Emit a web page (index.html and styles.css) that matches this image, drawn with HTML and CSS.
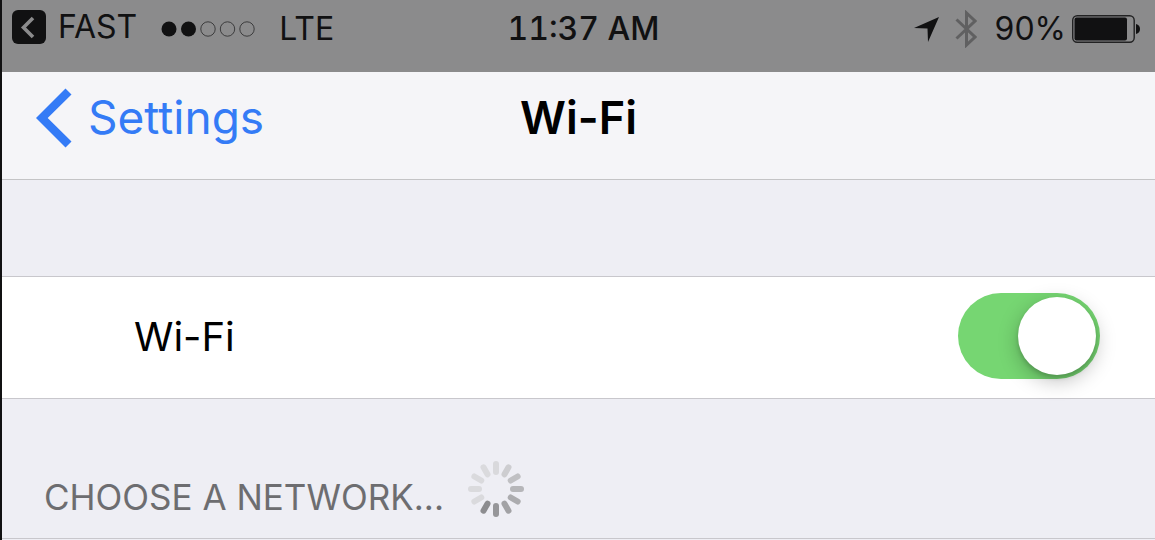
FILE: index.html
```html
<!DOCTYPE html>
<html lang="en">
<head>
  <meta charset="UTF-8" />
  <meta name="viewport" content="width=device-width, initial-scale=1" />
  <title>Wi-Fi</title>
  <link rel="stylesheet" href="styles.css">
</head>
<body>
  <div class="status-bar">
    <div class="status-left">
      <a class="back-app" href="#fast">
        <svg width="34" height="34" viewBox="0 0 34 34" aria-hidden="true">
          <rect width="34" height="34" rx="6" fill="#111112" />
          <path d="M21 8 L11.500 17.500 L21 27" fill="none" stroke="#8b8b8c" stroke-width="3.600" />
        </svg>
        <span>FAST</span>
      </a>
      <svg class="signal" width="94" height="16" viewBox="0 0 94 16" aria-hidden="true">
        <circle cx="8" cy="8" r="7.500" fill="#111112" />
        <circle cx="27.500" cy="8" r="7.500" fill="#111112" />
        <g fill="none" stroke="#3c3c3d" stroke-width="1">
          <circle cx="47" cy="8" r="7.200" />
          <circle cx="66.500" cy="8" r="7.200" />
          <circle cx="86" cy="8" r="7.200" />
        </g>
      </svg>
      <span class="carrier">LTE</span>
    </div>
    <time class="clock">11:37 AM</time>
    <div class="status-right">
      <svg class="location" width="25" height="25" viewBox="0 0 25 25" aria-hidden="true">
        <path d="M25 0 L14 25 L13.500 11.500 L0 11 Z" fill="#111112" />
      </svg>
      <svg class="bluetooth" width="22" height="38" viewBox="0 0 22 38" aria-hidden="true">
        <path d="M1.500 9.500 L20 27 L11.500 35 V3 L20 11 L1.500 28.500" fill="none" stroke="#606061" stroke-width="3" />
      </svg>
      <span class="percent">90%</span>
      <svg class="battery" width="69" height="28" viewBox="0 0 69 28" aria-hidden="true">
        <rect x="0.700" y="0.700" width="61.500" height="26.500" rx="4.500" fill="none" stroke="#222223" stroke-width="1.400" />
        <rect x="2.500" y="2.500" width="52.500" height="23" rx="2" fill="#111112" />
        <path d="M64 9 Q68 10 68 14 Q68 18 64 19 Z" fill="#111112" />
      </svg>
    </div>
  </div>

  <header class="nav-bar">
    <a class="back" href="#settings">
      <svg width="36" height="60" viewBox="0 0 36 60" aria-hidden="true">
        <path d="M0 30 L29.500 0.600 L35.500 6.400 L11.700 30 L35.500 53.600 L29.500 59.400 Z" fill="#347bf6" />
      </svg>
      <span>Settings</span>
    </a>
    <h1>Wi-Fi</h1>
  </header>

  <main>
    <div class="row">
      <label for="wifi">Wi-Fi</label>
      <input class="switch" type="checkbox" role="switch" id="wifi" checked>
    </div>

    <div class="section-head">
      <h2>CHOOSE A NETWORK...</h2>
      <svg class="spinner" width="56" height="56" viewBox="-28 -28 56 56" aria-hidden="true">
        <g stroke-width="6" stroke-linecap="round">
          <line y1="-17" y2="-25" stroke="#d9d9dc" />
          <line y1="-17" y2="-25" stroke="#cdcdd0" transform="rotate(30)" />
          <line y1="-17" y2="-25" stroke="#c0c0c3" transform="rotate(60)" />
          <line y1="-17" y2="-25" stroke="#b6b6b9" transform="rotate(90)" />
          <line y1="-17" y2="-25" stroke="#acacaf" transform="rotate(120)" />
          <line y1="-17" y2="-25" stroke="#a2a2a5" transform="rotate(150)" />
          <line y1="-17" y2="-25" stroke="#969699" transform="rotate(180)" />
          <line y1="-17" y2="-25" stroke="#8c8c8f" transform="rotate(210)" />
          <line y1="-17" y2="-25" stroke="#dadadd" transform="rotate(240)" />
          <line y1="-17" y2="-25" stroke="#dadadd" transform="rotate(270)" />
          <line y1="-17" y2="-25" stroke="#dadadd" transform="rotate(300)" />
          <line y1="-17" y2="-25" stroke="#dadadd" transform="rotate(330)" />
        </g>
      </svg>
    </div>
  </main>
</body>
</html>
```

FILE: styles.css
```css
* {
  box-sizing: border-box;
}
body {
  margin: 0;
  min-height: 100vh;
  border-left: 2px solid #111112;
  background: #eeeef4;
  color: #000;
  font-family: Inter, "Liberation Sans", sans-serif;
}
svg {
  display: block;
  flex: none;
}
a {
  text-decoration: none;
}
h1, h2 {
  margin: 0;
}

/* status bar */
.status-bar {
  display: grid;
  grid-template-columns: 1fr auto 1fr;
  align-items: center;
  padding-bottom: 14px;
  background: #8b8b8c;
  color: #111112;
  font-size: 32px;
  line-height: 58px;
  white-space: nowrap;
}
.status-left, .status-right, .back-app {
  display: flex;
  align-items: center;
}
.status-left {
  padding-left: 10px;
}
.back-app {
  gap: 12px;
  padding-bottom: 4px;
  line-height: 54px;
  color: inherit;
}
.signal {
  margin: 0 24px;
}
.clock {
  padding-left: 10px;
  font-weight: 500;
  font-variant-numeric: tabular-nums;
}
.status-right {
  justify-content: flex-end;
  padding-right: 14px;
}
.bluetooth {
  margin: 0 18px 0 16px;
}
.battery {
  margin-left: 6px;
}

/* navigation bar */
.nav-bar {
  display: grid;
  grid-template-columns: 1fr auto 1fr;
  align-items: center;
  padding-bottom: 16px;
  border-bottom: 1px solid #c4c4c6;
  background: #f5f5f8;
  font-size: 46px;
  line-height: 91px;
}
.back {
  display: flex;
  align-items: center;
  gap: 16px;
  padding-left: 34px;
  color: #347bf6;
}
.nav-bar h1 {
  font-size: 45px;
  font-weight: 600;
}

/* settings rows */
main {
  padding-top: 96px;
}
.row {
  display: flex;
  align-items: center;
  justify-content: space-between;
  padding: 16px 55px 19px 132px;
  border: solid #c8c7cc;
  border-width: 1px 0;
  background: #fff;
  font-size: 40px;
}
.switch {
  appearance: none;
  display: flex;
  justify-content: flex-end;
  width: 142px;
  height: 86px;
  margin: 0;
  padding: 4px;
  border-radius: 43px;
  background: #d8d8dc;
  cursor: pointer;
}
.switch::before {
  content: "";
  width: 78px;
  height: 78px;
  border-radius: 50%;
  background: #fff;
  box-shadow: 0 6px 20px rgba(0, 0, 0, 0.25), 0 3px 4px rgba(0, 0, 0, 0.15);
}
.switch:checked {
  background: #76d672;
}
.switch:not(:checked) {
  justify-content: flex-start;
}
.section-head {
  display: flex;
  align-items: center;
  gap: 24px;
  padding: 62px 42px 21px;
  border-bottom: 1px solid #c8c7cc;
}
.section-head h2 {
  padding-top: 16px;
  color: #6d6d70;
  font-size: 35px;
  font-weight: 400;
  line-height: 40px;
}
```
